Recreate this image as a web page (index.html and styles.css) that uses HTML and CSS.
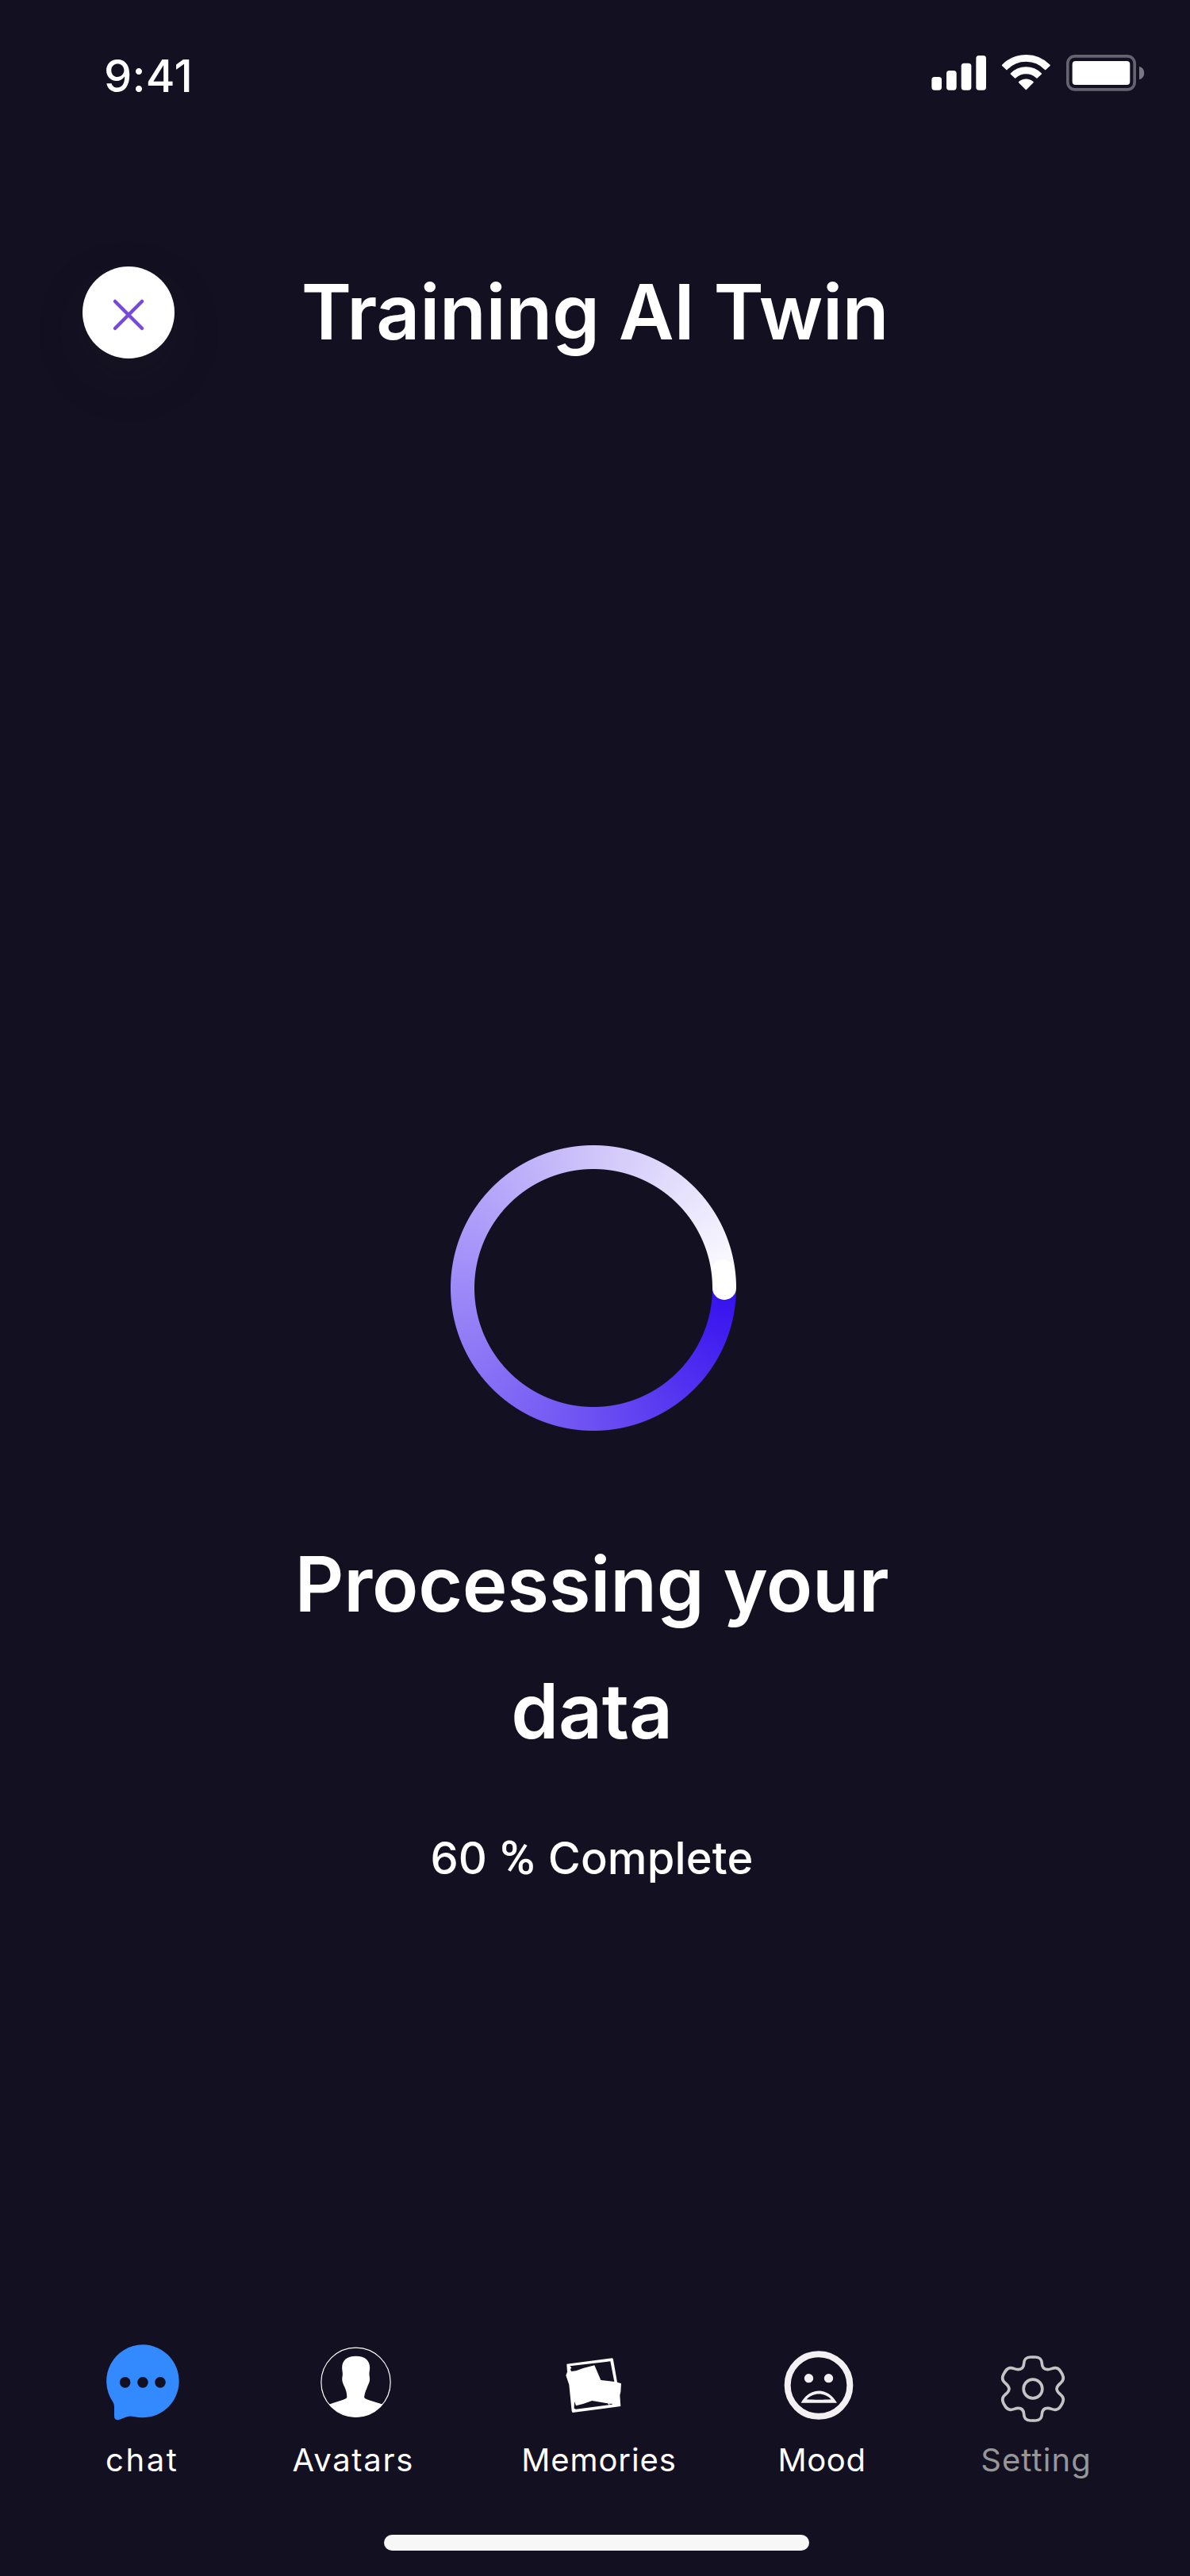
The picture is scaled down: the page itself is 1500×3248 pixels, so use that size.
FILE: index.html
```html
<!DOCTYPE html>
<html lang="en">
<head>
<meta charset="utf-8">
<title>Training AI Twin</title>
<link rel="stylesheet" href="styles.css">
</head>
<body>
<div class="screen">
  <header class="status">
    <span class="time">9:41</span>
    <svg class="status-icons" viewBox="60 45 825 160" aria-hidden="true">
      <g fill="#fff">
        <rect x="73" y="141" width="38" height="50" rx="11"/>
        <rect x="129" y="117" width="38" height="74" rx="11"/>
        <rect x="185" y="89" width="38" height="102" rx="11"/>
        <rect x="241" y="60" width="38" height="131" rx="11"/>
        <g stroke="#fff" stroke-width="5" stroke-linejoin="round">
          <path d="M341 97A124 124 0 0 1 519 97L503 112A101 101 0 0 0 357 112Z"/>
          <path d="M373 129A80 80 0 0 1 487 129L471 144A59 59 0 0 0 389 144Z"/>
          <path d="M404 161A38 38 0 0 1 456 161L430 187Z"/>
        </g>
        <rect x="605" y="81" width="218" height="90" rx="12"/>
      </g>
      <rect x="587.500" y="62.500" width="253" height="126" rx="27" fill="none" stroke="#666370" stroke-width="11"/>
      <path d="M858 101A26 26 0 0 1 858 151Z" fill="#7b7883"/>
    </svg>
  </header>

  <div class="titlebar">
    <button class="close" aria-label="Close">
      <svg viewBox="0 0 42 42"><path d="M4 4L38 38M38 4L4 38"/></svg>
    </button>
    <h1 class="heading">Training AI Twin</h1>
  </div>

  <main class="progress">
    <div class="ring"><svg viewBox="0 0 360 360"><path d="M343.600 159Q345 170 345 180"/></svg></div>
    <h2 class="heading processing">Processing your data</h2>
    <p class="percent">60 <span class="sign">%</span> Complete</p>
  </main>

  <nav class="tabs">
    <a class="tab">
      <svg viewBox="-66 30 600 360"><path fill="#338aff" d="M240 79A138 138 0 1 1 206 351Q192 347 180 352L150 363Q133 366 132 350V314Q132 302 126 294A138 138 0 0 1 240 79Z"/><g fill="#131022"><circle cx="173" cy="221.500" r="20.500"/><circle cx="240" cy="221.500" r="20.500"/><circle cx="306" cy="221.500" r="20.500"/></g></svg>
      <span class="label chat">chat</span>
    </a>
    <a class="tab">
      <svg viewBox="733.500 30 600 360"><circle cx="1044" cy="221.500" r="131" fill="none" stroke="#fff" stroke-width="3.500"/><path fill="#fff" d="M1044 122C1080 122 1097 140 1097 166C1097 178 1093 186 1096 200C1098 213 1096 222 1089 235C1080 258 1077 266 1076 279C1079 286 1110 293 1146 305A132 132 0 0 1 943 305C975 293 1008 286 1010 279C1011 266 1009 256 1001 238C993 222 991 212 993 200C996 188 992 178 992 166C992 138 1010 122 1044 122Z"/></svg>
      <span class="label avatars">Avatars</span>
    </a>
    <a class="tab">
      <svg viewBox="105 30 600 360"><path fill="#fff" fill-rule="evenodd" d="M283 152L455 130Q459 131 459 136L474 221L489 226L487 258L484 270L487 312L305 336L302 330L292 230L280 195L285 182ZM295 160L301 166L297 172L300 180L318 178L345 168L388 157L398 180L412 213L463 219L448 142ZM312 294L311 320L318 323L443 307L438 301L379 291L345 303L318 310Z"/><path d="M444 304H455" stroke="#131022" stroke-width="3"/></svg>
      <span class="label memories">Memories</span>
    </a>
    <a class="tab">
      <svg viewBox="948 30 600 360"><circle cx="1236" cy="232.500" r="118" fill="none" stroke="#f3f0f2" stroke-width="24"/><g fill="#f3f0f2"><circle cx="1198.500" cy="206" r="17"/><circle cx="1273.500" cy="206" r="17"/><path fill-rule="evenodd" d="M1169 299C1202 238 1271 238 1305 299ZM1190 286C1215 288 1259 288 1283 286C1259 259 1215 259 1190 286Z"/></g></svg>
      <span class="label mood">Mood</span>
    </a>
    <a class="tab">
      <svg viewBox="78 30 600 360" fill="none" stroke="#c4c4c4" stroke-width="11">
        <defs><path id="gear-quarter" d="M365 126H376C391 126 400 136 400 150C401 165 408 173 422 173C434 173 440 166 452 167C466 168 471 180 477 191C484 205 481 216 471 224C463 231 456 236 456 247"/></defs>
        <use href="#gear-quarter"/><use href="#gear-quarter" transform="matrix(-1 0 0 1 732 0)"/><use href="#gear-quarter" transform="matrix(1 0 0 -1 0 492)"/><use href="#gear-quarter" transform="matrix(-1 0 0 -1 732 492)"/>
        <circle cx="366" cy="246" r="35.500"/>
      </svg>
      <span class="label setting">Setting</span>
    </a>
  </nav>
  <div class="home-indicator"></div>
</div>
</body>
</html>
```
FILE: styles.css
```css
* { box-sizing: border-box; }
body { margin: 0; background: #131022; color: #fff; font-family: Inter, "Liberation Sans", sans-serif; }
.screen { width: 1500px; height: 3248px; display: flex; flex-direction: column; overflow: hidden; }

.status { display: flex; justify-content: space-between; padding: 56px 55px 0 131px; height: 313px; }
.time { font-size: 56px; line-height: 80px; font-weight: 500; letter-spacing: .3px; }
.status-icons { width: 275px; height: 53.333px; margin-top: 9px; }

.titlebar { display: grid; grid-template-columns: 116px 1fr 116px; padding: 0 104px; height: 160px; }
.close { width: 116px; height: 116px; margin-top: 23px; padding: 6px 0 0; border: 0; border-radius: 50%; background: #fff; display: grid; place-items: center; box-shadow: 0 24px 56px rgba(30, 30, 28, .25); }
.close svg { width: 42px; height: 42px; fill: none; stroke: #7749da; stroke-width: 4.5; stroke-linecap: round; }
.heading { margin: 0; font-size: 96px; line-height: 160px; font-weight: 600; text-align: center; letter-spacing: -.25px; }

.progress { display: flex; flex-direction: column; align-items: center; padding: 971px 8px 0 0; }
.ring { width: 360px; height: 360px; margin-left: 4px; background: conic-gradient(from 90deg, #3510ee, #6c50f2 25%, #9d8af8 50%, #cfc5fa 75%, #fff); -webkit-mask: radial-gradient(circle, transparent 149.500px, #000 150.500px 179.500px, transparent 180.500px); mask: radial-gradient(circle, transparent 149.500px, #000 150.500px 179.500px, transparent 180.500px); }
.ring svg { display: block; fill: none; stroke: #fff; stroke-width: 30; stroke-linecap: round; }
.processing { width: 800px; margin-top: 113px; }
.percent { margin: 66px 0 0; font-size: 56px; line-height: 80px; font-weight: 500; letter-spacing: .15px; }
.sign { font-family: Roboto, sans-serif; font-size: 60px; font-weight: 500; line-height: 1; margin: 0 1px; }

.tabs { display: grid; grid-template-columns: 256px 277px 344px 218px 322px; padding-left: 50px; margin-top: 557px; }
.tab { display: flex; flex-direction: column; align-items: center; gap: 12px; }
.tab svg { width: 200px; height: 120px; }
.label { font-size: 40px; line-height: 60px; }
.chat { letter-spacing: 2.6px; margin-right: -2.6px; }
.avatars { letter-spacing: 1.7px; margin-right: -1.7px; }
.memories { letter-spacing: .9px; }
.mood { letter-spacing: .6px; }
.setting { letter-spacing: 1.1px; color: #969696; }

.home-indicator { width: 536px; height: 20px; margin: 64px 0 0 484px; border-radius: 10px; background: #f7f7f7; }
```
